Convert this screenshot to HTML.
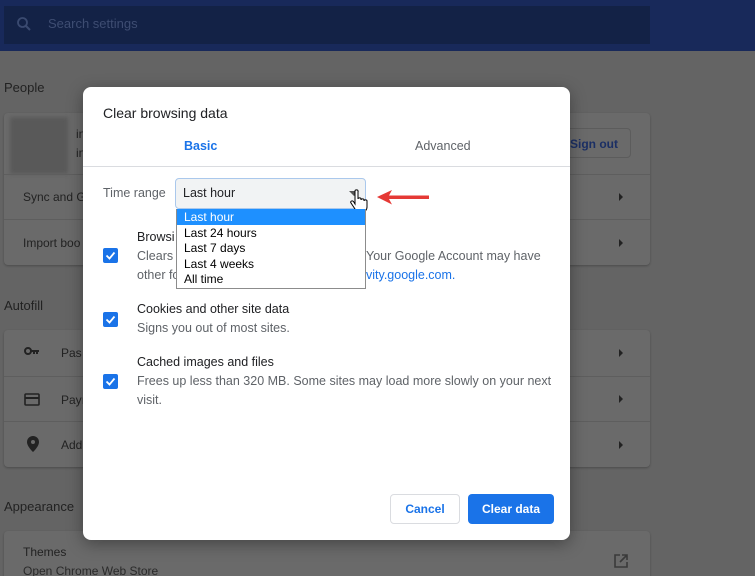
<!DOCTYPE html>
<html><head><style>
*{margin:0;padding:0;box-sizing:border-box}
html,body{width:755px;height:576px;overflow:hidden;background:#646464}
body{font-family:"Liberation Sans",Arial,sans-serif;position:relative;color:#1e1e1e}
.abs{position:absolute}
.hdr{left:0;top:0;width:755px;height:51px;background:#18295a}
.search{left:4px;top:6px;width:646px;height:38px;background:#132246}
.card{background:#6a6a6a;border-radius:4px;box-shadow:0 1px 2px rgba(0,0,0,.25)}
.sec{font-size:13px;color:#222}
.row{font-size:12px;color:#222}
.line{height:1px;background:#5e5e5e}
.arr{width:0;height:0;border-top:4px solid transparent;border-bottom:4px solid transparent;border-left:4px solid #222}
.dlg{left:83px;top:87px;width:487px;height:453px;background:#fff;border-radius:8px;box-shadow:0 4px 16px rgba(0,0,0,.35)}
.cb{width:15px;height:15px;background:#1a73e8;border-radius:2px}
.t{font-size:12.5px;color:#202124}
.s{font-size:12.5px;color:#5f6368}
</style></head><body>
<div class="abs hdr"></div>
<div class="abs search"></div>
<svg class="abs" style="left:16px;top:16px" width="16" height="16" viewBox="0 0 16 16"><circle cx="6.5" cy="6.5" r="4.5" fill="none" stroke="#3a4a70" stroke-width="1.8"/><line x1="10" y1="10" x2="14" y2="14" stroke="#3a4a70" stroke-width="2"/></svg>
<div class="abs" style="left:48px;top:16px;font-size:13px;color:#3e4d72">Search settings</div>

<div class="abs sec" style="left:4px;top:80px">People</div>
<div class="abs card" style="left:4px;top:113px;width:646px;height:152px"></div>
<div class="abs" style="left:10px;top:117px;width:58px;height:57px;background:#595959;filter:blur(2px)"></div>
<div class="abs row" style="left:76px;top:127px">in</div>
<div class="abs row" style="left:76px;top:146px">in</div>
<div class="abs" style="left:563px;top:128px;width:68px;height:30px;border:1px solid #5c5c5c;border-radius:4px;font-size:12px;font-weight:bold;color:#1b2f64;padding:8px 0 0 6px">Sign out</div>
<div class="abs line" style="left:4px;top:174px;width:646px"></div>
<div class="abs row" style="left:23px;top:190px">Sync and G</div>
<div class="abs arr" style="left:619px;top:193px"></div>
<div class="abs line" style="left:4px;top:219px;width:646px"></div>
<div class="abs row" style="left:23px;top:236px">Import boo</div>
<div class="abs arr" style="left:619px;top:239px"></div>

<div class="abs sec" style="left:4px;top:298px">Autofill</div>
<div class="abs card" style="left:4px;top:330px;width:646px;height:137px"></div>
<div class="abs row" style="left:61px;top:346px">Pas</div>
<div class="abs arr" style="left:619px;top:349px"></div>
<div class="abs line" style="left:4px;top:376px;width:646px"></div>
<div class="abs row" style="left:61px;top:393px">Payı</div>
<div class="abs arr" style="left:619px;top:395px"></div>
<div class="abs line" style="left:4px;top:421px;width:646px"></div>
<div class="abs row" style="left:61px;top:438px">Add</div>
<div class="abs arr" style="left:619px;top:441px"></div>
<svg class="abs" style="left:24px;top:346px" width="16" height="10" viewBox="0 0 16 10"><circle cx="4" cy="5" r="3" fill="none" stroke="#222" stroke-width="2"/><path d="M7 4h8v2h-1v2h-2V6h-1v2H9V6H7z" fill="#222"/></svg>
<svg class="abs" style="left:24px;top:393px" width="16" height="13" viewBox="0 0 16 13"><rect x="1" y="1" width="14" height="11" rx="1" fill="none" stroke="#222" stroke-width="1.6"/><rect x="1" y="4" width="14" height="2" fill="#222"/></svg>
<svg class="abs" style="left:27px;top:436px" width="12" height="16" viewBox="0 0 12 16"><path d="M6 0C2.7 0 0 2.6 0 6c0 4.5 6 10 6 10s6-5.5 6-10C12 2.6 9.3 0 6 0z" fill="#222"/><circle cx="6" cy="6" r="2" fill="#6a6a6a"/></svg>

<div class="abs sec" style="left:4px;top:499px">Appearance</div>
<div class="abs card" style="left:4px;top:531px;width:646px;height:60px"></div>
<div class="abs row" style="left:23px;top:545px">Themes</div>
<div class="abs row" style="left:23px;top:564px;color:#2a2a2a">Open Chrome Web Store</div>
<svg class="abs" style="left:614px;top:554px" width="14" height="14" viewBox="0 0 14 14"><path d="M6 1H1v12h12V8" fill="none" stroke="#3a3a3a" stroke-width="1.6"/><path d="M8 1h5v5M13 1L6 8" fill="none" stroke="#3a3a3a" stroke-width="1.6"/></svg>

<div class="abs dlg"></div>
<div class="abs" style="left:103px;top:105px;font-size:14px;color:#202124">Clear browsing data</div>
<div class="abs" style="left:184px;top:139px;font-size:12.5px;font-weight:bold;color:#1a73e8">Basic</div>
<div class="abs" style="left:415px;top:139px;font-size:12.5px;color:#5f6368">Advanced</div>
<div class="abs" style="left:83px;top:166px;width:487px;height:1px;background:#dadce0"></div>
<div class="abs s" style="left:103px;top:186px">Time range</div>

<div class="abs t" style="left:137px;top:230px">Browsi</div>
<div class="abs cb" style="left:103px;top:248px"></div>
<div class="abs s" style="left:137px;top:249px">Clears</div>
<div class="abs s" style="left:366px;top:249px">Your Google Account may have</div>
<div class="abs s" style="left:137px;top:268px">other fo</div>
<div class="abs s" style="left:366px;top:268px;color:#1a73e8">vity.google.com.</div>

<div class="abs t" style="left:137px;top:302px">Cookies and other site data</div>
<div class="abs cb" style="left:103px;top:312px"></div>
<div class="abs s" style="left:137px;top:321px">Signs you out of most sites.</div>
<div class="abs t" style="left:137px;top:355px">Cached images and files</div>
<div class="abs cb" style="left:103px;top:374px"></div>
<div class="abs s" style="left:137px;top:374px">Frees up less than 320 MB. Some sites may load more slowly on your next</div>
<div class="abs s" style="left:137px;top:393px">visit.</div>

<div class="abs" style="left:390px;top:494px;width:70px;height:30px;border:1px solid #dadce0;border-radius:4px;font-size:12px;font-weight:bold;color:#1a73e8;text-align:center;line-height:28px">Cancel</div>
<div class="abs" style="left:468px;top:494px;width:86px;height:30px;background:#1a73e8;border-radius:4px;font-size:12px;font-weight:bold;color:#fff;text-align:center;line-height:30px">Clear data</div>

<div class="abs" style="left:175px;top:178px;width:191px;height:31px;background:#f1f3f4;border:1px solid #aac8ec;border-radius:4px"></div>
<div class="abs t" style="left:183px;top:186px">Last hour</div>
<div class="abs" style="left:349px;top:191px;width:0;height:0;border-left:5px solid transparent;border-right:5px solid transparent;border-top:5px solid #555"></div>
<svg class="abs" style="left:350px;top:189px" width="20" height="24" viewBox="0 0 20 24"><path d="M5 2c0-1.5 3-1.5 3 0v8c0-1.5 3-1.5 3 0v1c0-1.5 3-1.5 3 0v1c0-1.5 3-1.5 3 0v6c0 3-2 5-5 5H9c-2 0-3-1-4-3l-4-6c-1-1.5 1-3 2.5-1.5L5 15z" fill="#fff" stroke="#000" stroke-width="1"/></svg>
<div class="abs" style="left:176px;top:209px;width:190px;height:80px;background:#fff;border:1px solid #8c8c8c"></div>
<div class="abs" style="left:177px;top:209px;width:188px;height:16px;background:#1e90ff"></div>
<div class="abs" style="left:184px;top:210px;font-size:12px;color:#fff">Last hour</div>
<div class="abs" style="left:184px;top:226px;font-size:12px;color:#000">Last 24 hours</div>
<div class="abs" style="left:184px;top:241px;font-size:12px;color:#000">Last 7 days</div>
<div class="abs" style="left:184px;top:257px;font-size:12px;color:#000">Last 4 weeks</div>
<div class="abs" style="left:184px;top:272px;font-size:12px;color:#000">All time</div>

<svg class="abs" style="left:375px;top:188px" width="56" height="18" viewBox="0 0 56 18"><path d="M2 9L17 2l-3 5.5h40v3.5H14l3 5.5z" fill="#e53935"/></svg>
<svg class="abs" style="left:103px;top:248px" width="15" height="15"><path d="M3.5 7.5l3 3 5-6" fill="none" stroke="#fff" stroke-width="1.8"/></svg>
<svg class="abs" style="left:103px;top:312px" width="15" height="15"><path d="M3.5 7.5l3 3 5-6" fill="none" stroke="#fff" stroke-width="1.8"/></svg>
<svg class="abs" style="left:103px;top:374px" width="15" height="15"><path d="M3.5 7.5l3 3 5-6" fill="none" stroke="#fff" stroke-width="1.8"/></svg>
</body></html>
